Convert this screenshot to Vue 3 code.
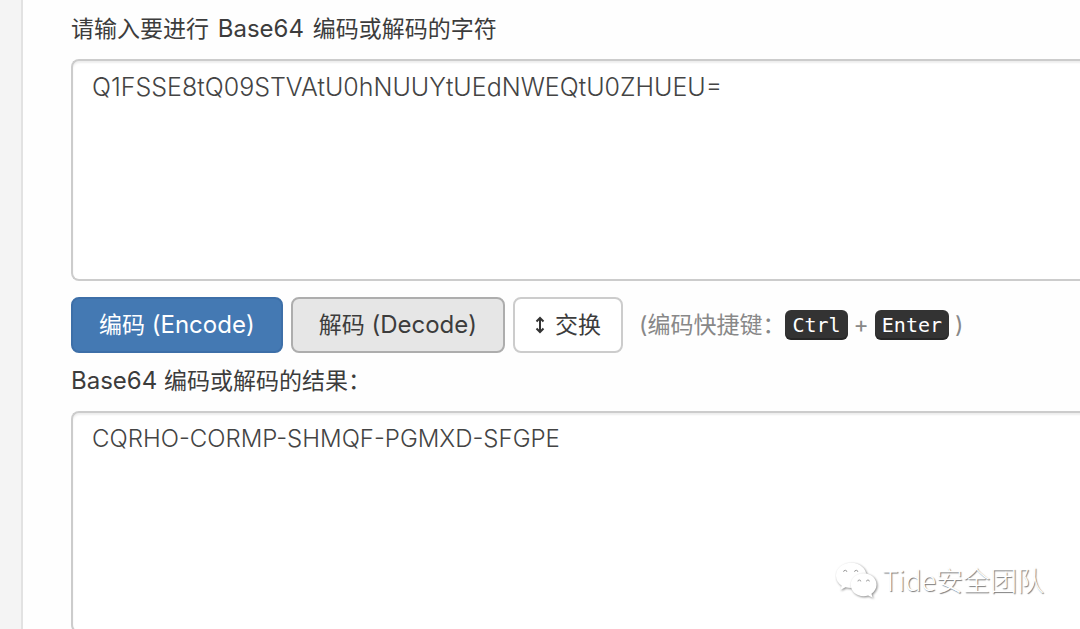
<script setup>
import { ref } from 'vue'

const source = ref('Q1FSSE8tQ09STVAtU0hNUUYtUEdNWEQtU0ZHUEU=')
const result = ref('CQRHO-CORMP-SHMQF-PGMXD-SFGPE')

function toBase64() {
  const bytes = new TextEncoder().encode(source.value)
  result.value = btoa(String.fromCharCode(...bytes))
}

function fromBase64() {
  try {
    const bytes = Uint8Array.from(atob(source.value.trim()), (c) => c.charCodeAt(0))
    result.value = new TextDecoder().decode(bytes)
  } catch {
    result.value = ''
  }
}

function swap() {
  const previous = source.value
  source.value = result.value
  result.value = previous
}
</script>

<template>
  <div class="page">
    <main class="panel">
      <label class="caption" for="source">请输入要进行<span class="latin inner"> Base64 </span>编码或解码的字符</label>
      <textarea id="source" v-model="source" class="field source" spellcheck="false" @keydown.ctrl.enter="toBase64"></textarea>
      <div class="actions">
        <button type="button" class="btn primary" @click="toBase64"><span>编码<span class="latin"> (Encode)</span></span></button>
        <button type="button" class="btn active" @click="fromBase64"><span>解码<span class="latin"> (Decode)</span></span></button>
        <button type="button" class="btn swap" @click="swap">
          <svg class="arrows" viewBox="0 0 10 18" aria-hidden="true">
            <path d="M5 2v14M1.500 5.500 5 2l3.500 3.500M1.500 12.500 5 16l3.500-3.500" />
          </svg>
          交换
        </button>
        <p class="hint">
          <span>(编码快捷键：</span><kbd>Ctrl</kbd><span class="plus">+</span><kbd>Enter</kbd><span class="close">)</span>
        </p>
      </div>
      <label class="caption" for="result"><span class="latin">Base64 </span>编码或解码的结果：</label>
      <textarea id="result" v-model="result" class="field" spellcheck="false"></textarea>
    </main>
    <div class="watermark">
      <svg class="logo" viewBox="0 0 44 38" aria-hidden="true">
        <g class="bubble">
          <path d="M17 1C8 1 1 7 1 14.500c0 4.500 2.500 8 6 10.500l-1.500 4.500 5.500-2.800c2 .6 4 .8 6 .8 9 0 16-6 16-13S26 1 17 1z" />
          <path class="eye" d="M9 10.500a1.700 1.700 0 0 1 3.400 0M20.500 10.500a1.700 1.700 0 0 1 3.400 0" />
        </g>
        <g class="bubble">
          <path d="M30 12c-7.500 0-13.500 5.200-13.500 12S22.500 36 30 36c1.600 0 3.200-.3 4.700-.8l4.800 2.300-1.300-4c3.200-2.300 5.300-5.600 5.300-9.500 0-6.800-6-12-13.500-12z" />
          <path class="eye" d="M24 20.500a1.500 1.500 0 0 1 3 0M33 20.500a1.500 1.500 0 0 1 3 0" />
        </g>
      </svg>
      <span>Tide安全团队</span>
    </div>
  </div>
</template>

<style>
body {
  background: #f4f4f4;
  overflow: hidden;
}
</style>

<style scoped>
.page {
  height: 100vh;
  overflow: hidden;
  padding-left: 21px;
  box-sizing: border-box;
  font-family: Inter, "Noto Sans CJK SC", sans-serif;
  font-size: 23px;
  line-height: 34px;
  color: #3c3c3c;
}

.panel {
  display: flex;
  flex-direction: column;
  min-height: 100%;
  padding: 12px 0 0 48px;
  box-sizing: border-box;
  border-left: 2px solid #e2e2e2;
  background: #fefefe;
}

.caption {
  margin-bottom: 13px;
}

.latin {
  font-size: 24px;
}

.inner {
  margin: 0 2px;
}

.field {
  flex: none;
  height: 222px;
  margin: 0 -24px 0 0;
  padding: 10px 19px;
  box-sizing: border-box;
  border: 2px solid #ccc;
  border-right: 0;
  border-radius: 8px;
  outline: 0;
  resize: none;
  background: #fff;
  box-shadow: inset 0 2px 2px rgba(0, 0, 0, 0.07);
  color: #444;
  font: 300 24px/32px Inter, "Liberation Sans", sans-serif;
}

.source {
  font-size: 25px;
}

.actions {
  display: flex;
  align-items: center;
  gap: 8px;
  margin: 16px 0 11px;
}

.btn {
  display: flex;
  align-items: center;
  height: 56px;
  padding: 0 26px;
  border: 2px solid #ccc;
  border-radius: 8px;
  background: #fff;
  color: #3c3c3c;
  font: inherit;
  white-space: nowrap;
  cursor: pointer;
}

.primary {
  border-color: #3d6fa8;
  background: #4479b3;
  color: #fff;
}

.active {
  border-color: #adadad;
  background: #e6e6e6;
}

.swap {
  gap: 10px;
  padding: 0 20px;
}

.arrows {
  width: 10px;
  height: 18px;
  fill: none;
  stroke: #333;
  stroke-width: 2;
}

.hint {
  display: flex;
  align-items: center;
  margin: 0 0 0 8px;
  color: #888;
  white-space: nowrap;
}

kbd {
  padding: 0 7px;
  border-radius: 6px;
  background: #333;
  box-shadow: inset 0 -2px 0 rgba(0, 0, 0, 0.25);
  color: #fff;
  font: 20px/30px "DejaVu Sans Mono", monospace;
}

.plus {
  margin: 0 6px;
}

.close {
  margin-left: 6px;
}

.watermark {
  position: absolute;
  right: 36px;
  bottom: 30px;
  display: flex;
  align-items: center;
  gap: 5px;
  color: #fff;
  font: 300 27px/38px "Noto Sans CJK SC", sans-serif;
  text-shadow: 1px 1px 1px #777;
}

.logo {
  width: 42px;
  height: 38px;
  overflow: visible;
}

.bubble {
  fill: #fff;
  filter: drop-shadow(1px 1px 1px #888);
}

.eye {
  fill: #fff;
  stroke: #999;
  stroke-width: 1;
}
</style>
